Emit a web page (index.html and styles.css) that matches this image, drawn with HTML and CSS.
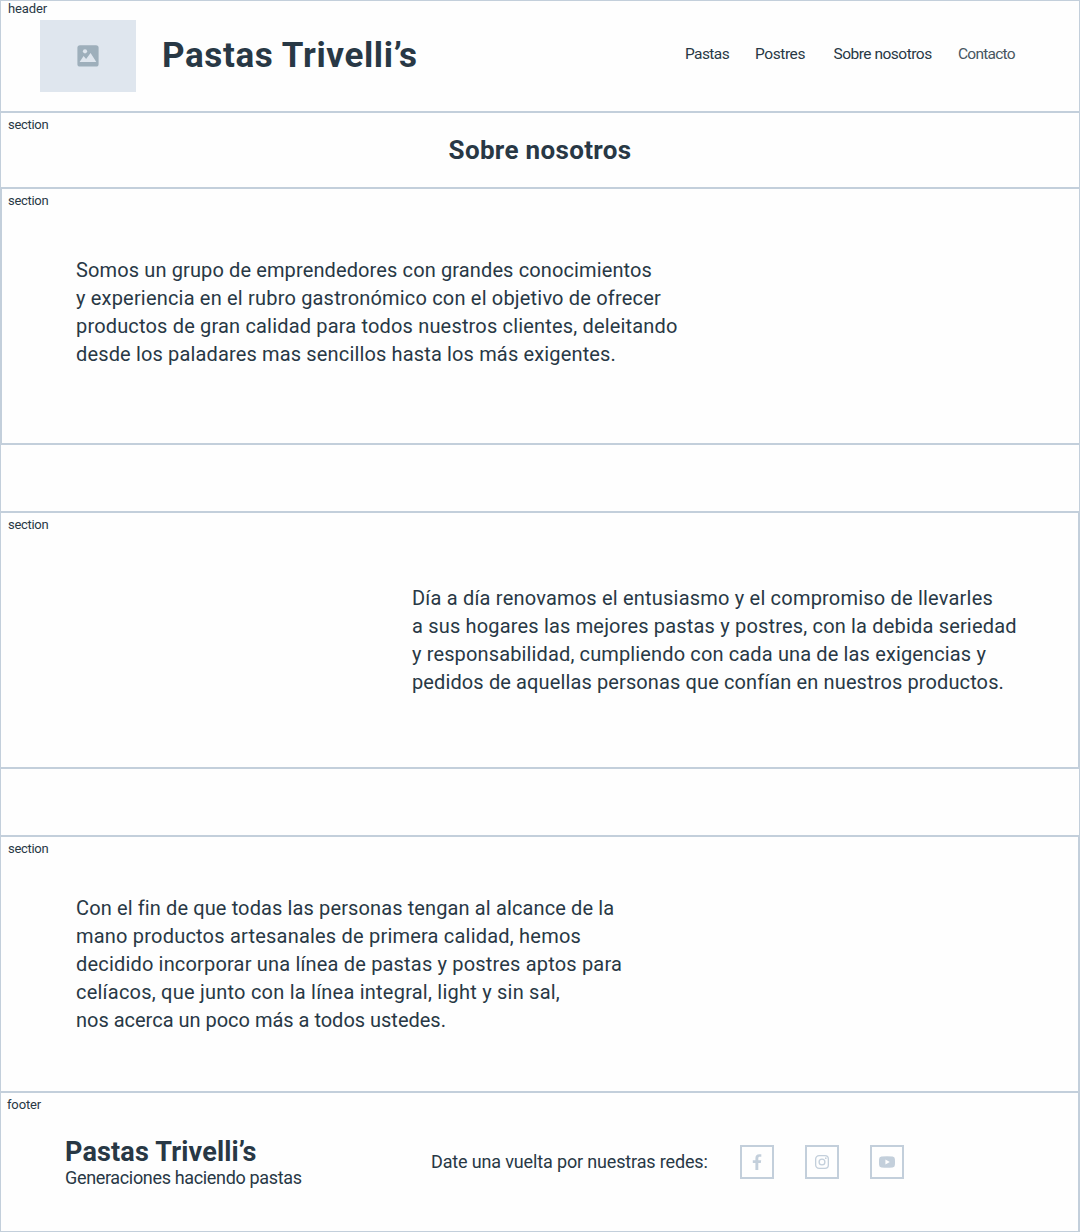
FILE: index.html
```html
<!DOCTYPE html>
<html lang="es">
<head>
<meta charset="utf-8">
<title>Pastas Trivelli’s</title>
<link rel="stylesheet" href="styles.css">
</head>
<body>
<div class="page">
  <header class="header">
    <span class="label label-header">header</span>
    <div class="logo">
      <svg width="22" height="22" viewBox="0 0 22 22"><rect x=".4" y=".2" width="21.2" height="21.4" rx="2.6" fill="#9eafbb"/><circle cx="8" cy="6.3" r="2.1" fill="#dfe6ee"/><path d="M2.6 17 6.6 11l2.5 2.9L13.6 8l5.7 9Z" fill="#dfe6ee"/></svg>
    </div>
    <h1 class="title">Pastas Trivelli’s</h1>
    <nav class="nav">
      <a class="n1">Pastas</a><a class="n2">Postres</a><a class="n3">Sobre nosotros</a><a class="n4">Contacto</a>
    </nav>
  </header>
  <section class="heading">
    <span class="label">section</span>
    <h2>Sobre nosotros</h2>
  </section>
  <section class="block block-who">
    <span class="label">section</span>
    <p class="text">
      <span class="l1">Somos un grupo de emprendedores con grandes conocimientos</span>
      <span class="l2">y experiencia en el rubro gastronómico con el objetivo de ofrecer</span>
      <span class="l3">productos de gran calidad para todos nuestros clientes, deleitando</span>
      <span class="l4">desde los paladares mas sencillos hasta los más exigentes.</span>
    </p>
  </section>
  <section class="block block-daily">
    <span class="label">section</span>
    <p class="text">
      <span class="l1">Día a día renovamos el entusiasmo y el compromiso de llevarles</span>
      <span class="l2">a sus hogares las mejores pastas y postres, con la debida seriedad</span>
      <span class="l3">y responsabilidad, cumpliendo con cada una de las exigencias y</span>
      <span class="l4">pedidos de aquellas personas que confían en nuestros productos.</span>
    </p>
  </section>
  <section class="block block-goal">
    <span class="label">section</span>
    <p class="text">
      <span class="l1">Con el fin de que todas las personas tengan al alcance de la</span>
      <span class="l2">mano productos artesanales de primera calidad, hemos</span>
      <span class="l3">decidido incorporar una línea de pastas y postres aptos para</span>
      <span class="l4">celíacos, que junto con la línea integral, light y sin sal,</span>
      <span class="l5">nos acerca un poco más a todos ustedes.</span>
    </p>
  </section>
  <footer class="footer">
    <span class="label label-footer">footer</span>
    <div class="brand">
      <strong>Pastas Trivelli’s</strong>
      <span>Generaciones haciendo pastas</span>
    </div>
    <div class="follow">Date una vuelta por nuestras redes:</div>
    <div class="social">
      <a><svg width="16" height="16" viewBox="0 0 16 16"><path fill="#c3cfdb" d="M6.4 16V9H3.8V6.2h2.6V4.1C6.4 1.5 7.9.2 10.2.2c1 0 1.9.1 2.1.15V2.8h-1.500c-1.200 0-1.500.6-1.500 1.500v1.900h2.900L11.800 9H9.300v7Z"/></svg></a>
      <a><svg width="16" height="16" viewBox="0 0 16 16" fill="none" stroke="#c3cfdb" stroke-width="1.3"><rect x="1.650" y="1.650" width="12.700" height="12.700" rx="3.400"/><circle cx="8" cy="8" r="2.900"/><circle cx="11.800" cy="4.200" r=".85" fill="#c3cfdb" stroke="none"/></svg></a>
      <a><svg width="16" height="16" viewBox="0 0 16 16"><path fill="#c3cfdb" fill-rule="evenodd" d="M2.500 2.500Q8 1.900 13.500 2.500 15.800 2.700 15.900 5 16.100 8 15.900 11 15.800 13.300 13.500 13.500 8 14.100 2.500 13.500.2 13.300.1 11-.1 8 .1 5 .2 2.700 2.500 2.500ZM6.400 5.500v5L10.800 8Z"/></svg></a>
    </div>
  </footer>
</div>
</body>
</html>
```
FILE: styles.css
```css
* { box-sizing: border-box; }
body { margin: 0; background: #fefefe; color: #283845; font-family: Roboto, "Liberation Sans", sans-serif; }
h1, h2, p { margin: 0; }
svg { display: block; }

.page { height: 1232px; border: 1px solid #c3cfdb; }

.label { position: absolute; left: 7px; top: 4px; font-size: 13px; line-height: 16px; letter-spacing: -.3px; }
.label-header { top: 0; letter-spacing: -.13px; }
.label-footer { left: 6px; letter-spacing: -.15px; }

.header { position: relative; display: flex; align-items: center; height: 112px; padding: 0 61.5px 0 39px; border-bottom: 2px solid #c3cfdb; }
.logo { display: flex; align-items: center; justify-content: center; width: 96px; height: 72px; margin-right: 26px; background: #dfe6ee; }
.title { font-size: 35px; line-height: 40px; font-weight: 700; letter-spacing: .63px; }
.nav { display: grid; grid-template-columns: 70px 78.5px 124px 60px; margin-left: auto; padding-bottom: 4px; font-size: 15.5px; line-height: 20px; white-space: nowrap; }
.n1 { letter-spacing: -.6px; }
.n2 { letter-spacing: -.42px; }
.n3 { letter-spacing: -.5px; }
.n4 { letter-spacing: -.75px; padding-left: .5px; opacity: .85; }

.heading { position: relative; display: flex; align-items: center; justify-content: center; height: 76px; border-bottom: 2px solid #c3cfdb; }
.heading h2 { font-size: 26px; line-height: 32px; font-weight: 700; letter-spacing: .32px; }

.block { position: relative; border-bottom: 2px solid #c3cfdb; }
.block-who { height: 256px; padding: 67px 0 0 74px; border-left: 1px solid #c3cfdb; }
.block-who .label { left: 6px; }
.block-daily, .block-goal { height: 258px; margin-top: 66px; border-top: 2px solid #c3cfdb; border-right: 1px solid #c3cfdb; }
.block-daily { padding: 71px 0 0 411px; }
.block-goal { padding: 57px 0 0 75px; }

.text { font-size: 20px; line-height: 28px; white-space: nowrap; }
.text span { display: block; }
.block-who .l1 { letter-spacing: .122px; }
.block-who .l2 { letter-spacing: .187px; }
.block-who .l3 { letter-spacing: .17px; }
.block-who .l4 { letter-spacing: .148px; }
.block-daily .l1 { letter-spacing: .201px; }
.block-daily .l2 { letter-spacing: .175px; }
.block-daily .l3 { letter-spacing: .135px; }
.block-daily .l4 { letter-spacing: .118px; }
.block-goal .l1 { letter-spacing: .12px; }
.block-goal .l2 { letter-spacing: .204px; }
.block-goal .l3 { letter-spacing: .178px; }
.block-goal .l4 { letter-spacing: .226px; }
.block-goal .l5 { letter-spacing: -.01px; }

.footer { position: relative; display: flex; align-items: center; height: 138px; padding-left: 64px; border-right: 1px solid #c3cfdb; }
.brand { width: 366px; }
.brand strong { display: block; font-size: 27px; line-height: 32px; letter-spacing: .16px; }
.brand span { display: block; font-size: 18px; line-height: 20px; letter-spacing: -.34px; }
.follow { width: 309px; font-size: 18px; line-height: 22px; letter-spacing: -.15px; white-space: nowrap; }
.social { display: flex; gap: 31px; }
.social a { display: flex; align-items: center; justify-content: center; width: 34px; height: 34px; border: 2px solid #c3cfdb; }
```
